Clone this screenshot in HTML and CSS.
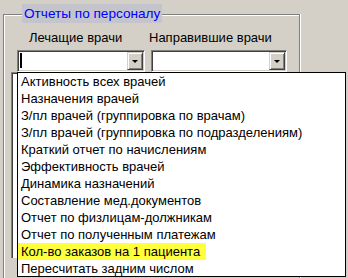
FILE: index.html
```html
<!DOCTYPE html>
<html>
<head>
<meta charset="utf-8">
<link rel="stylesheet" href="styles.css">
</head>
<body>
<div class="group">
  <div class="legend">Отчеты по персоналу</div>
  <div class="cols">
    <div class="col col1">
      <div class="label">Лечащие врачи</div>
      <div class="combo"><span class="caret"></span><span class="btn"><span class="arrow"></span></span></div>
    </div>
    <div class="col col2">
      <div class="label label2">Направившие врачи</div>
      <div class="combo"><span class="btn"><span class="arrow"></span></span></div>
    </div>
  </div>
  <div class="behind"></div>
</div>
<div class="dropdown">
  <div class="item"><span>Активность всех врачей</span></div>
  <div class="item"><span>Назначения врачей</span></div>
  <div class="item"><span>З/пл врачей (группировка по врачам)</span></div>
  <div class="item"><span>З/пл врачей (группировка по подразделениям)</span></div>
  <div class="item"><span>Краткий отчет по начислениям</span></div>
  <div class="item"><span>Эффективность врачей</span></div>
  <div class="item"><span>Динамика назначений</span></div>
  <div class="item"><span>Составление мед.документов</span></div>
  <div class="item"><span>Отчет по физлицам-должникам</span></div>
  <div class="item"><span>Отчет по полученным платежам</span></div>
  <div class="item sel"><span>Кол-во заказов на 1 пациента</span></div>
  <div class="item"><span>Пересчитать задним числом</span></div>
</div>
</body>
</html>
```
FILE: styles.css
```css
html, body {
  margin: 0;
  padding: 0;
  background: #d4d0c8;
  width: 348px;
  height: 278px;
  overflow: hidden;
  font-family: "Liberation Sans", Arial, sans-serif;
  font-size: 13px;
  color: #000;
}
body {
  padding-top: 14px;
  padding-left: 3px;
  box-sizing: border-box;
}
.group {
  position: relative;
  width: 297px;
  height: 264px;
  box-sizing: border-box;
  border: 1px solid #808080;
  border-bottom: none;
  box-shadow: inset 1px 1px 0 #fff, 1px 0 0 #fff;
  padding: 15px 0 0 13px;
}
.legend {
  position: absolute;
  left: 18px;
  top: -11px;
  height: 19px;
  padding: 0 2px;
  background: #c4c4cc;
  color: #0000ff;
  line-height: 19px;
  font-size: 13.6px;
}
.cols {
  display: flex;
  gap: 6px;
}
.col1 { width: 128px; }
.col2 { width: 136px; }
.label {
  height: 15px;
  line-height: 15px;
  padding-left: 12px;
  margin-bottom: 5px;
  white-space: nowrap;
}
.label2 {
  padding-left: 0;
  margin-left: -2px;
}
.combo {
  position: relative;
  height: 22px;
  box-sizing: border-box;
  background: #fff;
  border-top: 1px solid #808080;
  border-left: 1px solid #808080;
  border-right: 1px solid #fff;
  border-bottom: 1px solid #fff;
  box-shadow: inset 1px 1px 0 #404040, inset -1px -1px 0 #d4d0c8;
  display: flex;
  justify-content: flex-end;
  align-items: stretch;
  padding: 1px;
}
.caret {
  position: absolute;
  left: 2px;
  top: 2px;
  width: 2px;
  height: 15px;
  background: #000;
}
.btn {
  width: 16px;
  box-sizing: border-box;
  background: #d4d0c8;
  border-top: 1px solid #d4d0c8;
  border-left: 1px solid #d4d0c8;
  border-right: 1px solid #404040;
  border-bottom: 1px solid #404040;
  box-shadow: inset 1px 1px 0 #fff, inset -1px -1px 0 #808080;
  display: flex;
  align-items: center;
  justify-content: center;
}
.arrow {
  width: 0;
  height: 0;
  border-left: 3px solid transparent;
  border-right: 3px solid transparent;
  border-top: 3px solid #000;
  margin-top: 1px;
}
.behind {
  margin-left: -6px;
  height: 186px;
  width: 40px;
  box-sizing: border-box;
  border-top: 1px solid #808080;
  border-left: 1px solid #808080;
  box-shadow: inset 1px 1px 0 #404040;
  background: #fff;
}
.dropdown {
  position: absolute;
  left: 17px;
  top: 72px;
  width: 329px;
  height: 205px;
  box-sizing: border-box;
  border: 1px solid #000;
  background: #fff;
}
.item {
  height: 17px;
  line-height: 17px;
  white-space: nowrap;
}
.item span {
  display: inline-block;
  padding: 0 6px 0 3px;
}
.sel span {
  background: #ffff3c;
}
```
